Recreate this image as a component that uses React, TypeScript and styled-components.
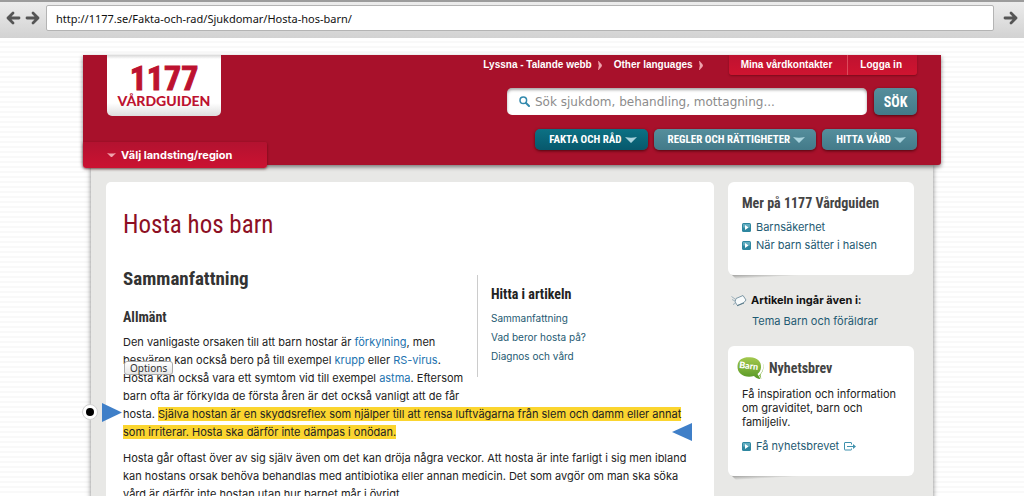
import React from 'react';
import styled, { createGlobalStyle } from 'styled-components';

const body = `"Inter", "Liberation Sans", Arial, sans-serif`;
const narrow = `"Liberation Sans Narrow", "Roboto Condensed", "Roboto", sans-serif`;
const red = '#a8112b';

const Global = createGlobalStyle`
  * { box-sizing: border-box; }
  body { margin: 0; overflow: hidden; color: #222; font: 11px/18px ${body}; }
  h1, h2, h3, p, ul { margin: 0; padding: 0; }
  ul { list-style: none; }
  a { color: #1e5a72; text-decoration: none; }
  button, input { font: inherit; margin: 0; }
`;

const Shell = styled.div`
  display: flex;
  flex-direction: column;
  height: 100vh;
`;

const Toolbar = styled.div`
  display: flex;
  align-items: center;
  gap: 6px;
  flex: none;
  height: 38px;
  padding: 0 6px 4px;
  border-top: 2px solid #9c9c9c;
  background: linear-gradient(#ececec, #d2d2d2);
`;

const ArrowButton = styled.button`
  display: flex;
  padding: 0;
  border: 0;
  background: none;
  svg { display: block; }
`;

const Arrows = styled.div`
  display: flex;
  gap: 4px;
`;

const Address = styled.input`
  flex: 1;
  min-width: 0;
  height: 26px;
  margin-right: 3px;
  padding: 0 9px;
  border: 1px solid #b4b4b4;
  border-radius: 2px;
  background: #fff;
  color: #111;
  font: 11px "Noto Sans", sans-serif;
`;

const Viewport = styled.div`
  flex: 1;
  min-height: 0;
  overflow: hidden auto;
  scrollbar-width: none;
  padding: 17px 83px 0;
  background: repeating-linear-gradient(#fff 0 3px, #f9f9f9 3px 5px);
`;

const Header = styled.header`
  position: relative;
  z-index: 1;
  display: flex;
  justify-content: space-between;
  height: 110px;
  border-radius: 0 0 3px 3px;
  background: ${red};
  box-shadow: 0 2px 4px rgba(0, 0, 0, 0.5);
`;

const Brand = styled.div`
  display: flex;
  flex-direction: column;
  justify-content: space-between;
  margin-bottom: -3px;
`;

const Logo = styled.a`
  display: flex;
  flex-direction: column;
  align-items: center;
  width: 114px;
  height: 61px;
  margin-left: 24px;
  padding-top: 8px;
  border-radius: 0 0 5px 5px;
  background: linear-gradient(#d8d8d8, #fff 4px, #fff 48px, #dedede);
  color: #bd1230;
`;

const LogoNumber = styled.span`
  font: 700 34px/30px ${narrow};
  -webkit-text-stroke: 1px #bd1230;
`;

const LogoName = styled.span`
  font: 900 14px/16px "Lato", sans-serif;
`;

const RegionButton = styled.button`
  display: flex;
  align-items: center;
  gap: 5px;
  width: 184px;
  height: 26px;
  padding: 0 0 0 24px;
  border: 0;
  border-radius: 0 2px 3px 3px;
  background: linear-gradient(#b31230, #cb1231);
  box-shadow: 0 1px 3px rgba(60, 0, 0, 0.6);
  color: #fff;
  font-weight: 700;
`;

const Tools = styled.div`
  display: flex;
  flex-direction: column;
  align-items: flex-end;
  padding-right: 24px;
`;

const TopLinks = styled.nav`
  display: flex;
  height: 20px;
  font: bold 10px/20px "Liberation Sans", Arial, sans-serif;
  a { color: #fff; }
`;

const PlainLink = styled.a`
  display: flex;
  align-items: center;
  gap: 6px;
  margin-right: 12px;
`;

const Account = styled.div`
  display: flex;
  margin-left: 14px;
  border-radius: 0 0 3px 3px;
  background: linear-gradient(#bf1230, #cf1430);
  box-shadow: 0 1px 2px rgba(60, 0, 0, 0.4);
  a { padding: 0 15px 0 12px; }
  a + a { border-left: 1px solid #dd4a5c; }
`;

const SearchForm = styled.form`
  display: flex;
  gap: 7px;
  margin-top: 13px;
`;

const SearchBox = styled.label`
  display: flex;
  align-items: center;
  gap: 5px;
  width: 360px;
  height: 27px;
  padding: 0 12px;
  border-radius: 5px;
  background: #fff;
  box-shadow: inset 0 2px 3px rgba(0, 0, 0, 0.35);
  input {
    flex: 1;
    min-width: 0;
    padding: 0;
    border: 0;
    outline: 0;
    background: none;
    font: 12px "DejaVu Sans", sans-serif;
  }
  input::placeholder { color: #8c8c8c; opacity: 1; }
`;

const TealButton = styled.button<{ $active?: boolean }>`
  display: flex;
  align-items: center;
  gap: 3px;
  padding: 0 11px 0 14px;
  border: 0;
  border-radius: 5px;
  background: ${p => (p.$active ? 'linear-gradient(#0c7184, #07586c)' : 'linear-gradient(#558e9c, #437a89)')};
  box-shadow: 0 1px 3px rgba(40, 0, 0, 0.7);
  color: #fff;
  font: bold 11px ${narrow};
`;

const SearchButton = styled(TealButton)`
  justify-content: center;
  width: 43px;
  padding: 0;
  font-size: 14px;
`;

const MainNav = styled.nav`
  display: flex;
  gap: 6px;
  height: 21px;
  margin-top: 14px;
`;

const Body = styled.div`
  display: flex;
  align-items: flex-start;
  gap: 14px;
  min-height: 500px;
  margin: 0 8px;
  padding: 17px 19px 20px 15px;
  background: #e8e8e6;
  box-shadow: 0 0 5px rgba(0, 0, 0, 0.5);
`;

const Article = styled.main`
  position: relative;
  flex: 1;
  min-width: 0;
  padding: 27px 16px 20px 17px;
  border-radius: 5px;
  background: #fff;
  p { margin-bottom: 8px; color: #222; }
  p a { color: #2273b0; }
`;

const Title = styled.h1`
  color: #8d0f24;
  font: 400 25px/32px ${narrow};
`;

const Section = styled.h2`
  padding-top: 24px;
  color: #333;
  font: 700 19px/28px ${narrow};
`;

const SubSection = styled.h3`
  margin: 14px 0 6px;
  color: #333;
  font: 700 14px/20px ${narrow};
`;

const Contents = styled.nav`
  float: right;
  width: 221px;
  height: 102px;
  margin-top: 34px;
  padding: 9px 0 0 13px;
  border-left: 1px solid #ccc;
  font-size: 10px;
  line-height: 19px;
  h2 { margin-bottom: 5px; color: #222; font: 700 14px/20px ${narrow}; }
`;

const Mark = styled.mark`
  background: #fbd52f;
  color: #222;
`;

const Pin = styled.span<{ $x: number; $y: number }>`
  position: absolute;
  left: ${p => p.$x}px;
  top: ${p => p.$y}px;
  svg { display: block; }
`;

const OptionsButton = styled.button`
  position: absolute;
  left: 18px;
  top: 179px;
  height: 14px;
  padding: 0 5px;
  border: 1px solid #aaa;
  border-radius: 3px;
  background: linear-gradient(#fff, #e6e6e6);
  color: #333;
  font: 10px/11px "Noto Sans", sans-serif;
`;

const Sidebar = styled.aside`
  width: 186px;
  flex: none;
`;

const Card = styled.section`
  position: relative;
  padding: 11px 14px 21px;
  border-radius: 6px;
  background: #fff;
  p { margin: 7px 0 8px; line-height: 14px; }
  &::after {
    content: '';
    position: absolute;
    z-index: 0;
    left: 4px;
    top: 100%;
    width: 70px;
    height: 4px;
    background: linear-gradient(to bottom right, #a2a2a0, #e8e8e6 55%);
    clip-path: polygon(0 0, 100% 0, 4px 100%);
  }
`;

const CardTitle = styled.h2`
  display: flex;
  align-items: center;
  gap: 5px;
  margin-bottom: 5px;
  color: #444;
  font: 700 14px/20px ${narrow};
`;

const NewsTitle = styled(CardTitle)`
  margin: -1px 0 0 -5px;
`;

const BulletLink = styled.a`
  display: flex;
  align-items: center;
  gap: 5px;
`;

const Related = styled.section`
  padding: 16px 0 16px 24px;
  h2 { display: flex; align-items: center; gap: 4px; margin: 0 0 3px -21px; color: #111; font: 700 11px/18px ${body}; }
`;

const NavArrow = ({ back }: { back?: boolean }) => (
  <svg width="15" height="16" viewBox="0 0 15 16" fill="none" stroke="#555" strokeWidth="2.8" strokeLinecap="round" strokeLinejoin="round">
    {back ? <path d="M13 8H2M7 3L2 8l5 5" /> : <path d="M2 8h11M8 3l5 5-5 5" />}
  </svg>
);

const Caret = ({ color = '#a9d3dd', width = 12 }: { color?: string; width?: number }) => (
  <svg width={width} height={width / 2} viewBox="0 0 12 6"><path d="M0 0Q6 1.6 12 0L6 6z" fill={color} /></svg>
);

const Chevron = () => (
  <svg width="4" height="9" viewBox="0 0 4 9"><path d="M0 0Q2 1 4 4.5Q2 8 0 9Q2 4.5 0 0z" fill="#f0a4ad" stroke="#f0a4ad" strokeWidth=".5" /></svg>
);

const Bullet = () => (
  <svg width="9" height="9" viewBox="0 0 9 9">
    <rect width="9" height="9" rx="1.5" fill="#2e87a0" />
    <rect x="1" y="1" width="7" height="3.5" fill="#62adc0" />
    <path d="M3 2l3.6 2.5L3 7z" fill="#fff" />
  </svg>
);

const Tag = () => (
  <svg width="16" height="13" viewBox="0 0 16 13" fill="none" stroke="#8ba5b2" strokeLinejoin="round">
    <path d="M5 4.5L12 1.5 15 6 13 8.5 6.5 11.5 4 8z" fill="#f8fbfc" stroke="#7e98a6" />
    <path d="M6 11.8l7-2.8" stroke="#5d7d8d" />
    <path d="M0.5 2.5L4 5M1 5.5L4 7M2 10.5Q4 10 5 8" strokeWidth=".8" />
  </svg>
);

const BarnBadge = () => (
  <svg width="27" height="24" viewBox="0 0 27 24">
    <defs>
      <linearGradient id="leaf" x1="0" y1="0" x2="0" y2="1">
        <stop offset="0" stopColor="#a3c84e" /><stop offset="1" stopColor="#569824" />
      </linearGradient>
    </defs>
    <path d="M0.5 10C1 3.5 6 1 13 1.3C21 1.6 24.5 6 24 11.5C23.8 14.5 22.5 16.5 20.5 18L23.5 23C20.5 22.8 18 21.5 17 20C8 22.5 0 18 0.5 10z" fill="url(#leaf)" />
    <path d="M25.5 6Q28 14 22 19.5L24.5 23Q23 19 24 18Q28 13 25.5 6z" fill="#79ad36" />
    <text x="2" y="13" fontFamily="Lato, sans-serif" fontSize="9" fontWeight="900" fill="#fff" transform="rotate(6 12 12)">Barn</text>
  </svg>
);

const External = () => (
  <svg width="12" height="9" viewBox="0 0 12 9" fill="none" stroke="#3f91ad">
    <path d="M7.5 2.5v-1.5a.5.5 0 0 0-.5-.5H1A.5.5 0 0 0 .5 1v6.5a.5.5 0 0 0 .5.5H7a.5.5 0 0 0 .5-.5V6.5M3 4.5h7" />
    <path d="M9 2l3 2.5L9 7z" fill="#3f91ad" stroke="none" />
  </svg>
);

const SearchIcon = () => (
  <svg width="11" height="11" viewBox="0 0 11 11" fill="none" stroke="#3389ad" strokeLinecap="round">
    <circle cx="4.3" cy="4.3" r="3.3" strokeWidth="1.5" />
    <path d="M7 7l3 3" strokeWidth="2" />
  </svg>
);

export default function App() {
  return (
    <Shell>
      <Global />
      <Toolbar>
        <Arrows>
          <ArrowButton aria-label="Back"><NavArrow back /></ArrowButton>
          <ArrowButton aria-label="Forward"><NavArrow /></ArrowButton>
        </Arrows>
        <Address aria-label="Address" defaultValue="http://1177.se/Fakta-och-rad/Sjukdomar/Hosta-hos-barn/" />
        <ArrowButton aria-label="Go"><NavArrow /></ArrowButton>
      </Toolbar>
      <Viewport>
        <Header>
          <Brand>
            <Logo href="#">
              <LogoNumber>1177</LogoNumber>
              <LogoName>VÅRDGUIDEN</LogoName>
            </Logo>
            <RegionButton><Caret color="#f0a4ad" width={9} />Välj landsting/region</RegionButton>
          </Brand>
          <Tools>
            <TopLinks>
              <PlainLink href="#">Lyssna - Talande webb <Chevron /></PlainLink>
              <PlainLink href="#">Other languages <Chevron /></PlainLink>
              <Account>
                <a href="#">Mina vårdkontakter</a>
                <a href="#">Logga in</a>
              </Account>
            </TopLinks>
            <SearchForm onSubmit={e => e.preventDefault()}>
              <SearchBox>
                <SearchIcon />
                <input aria-label="Sök" placeholder="Sök sjukdom, behandling, mottagning..." />
              </SearchBox>
              <SearchButton>SÖK</SearchButton>
            </SearchForm>
            <MainNav>
              <TealButton $active>FAKTA OCH RÅD <Caret /></TealButton>
              <TealButton>REGLER OCH RÄTTIGHETER <Caret /></TealButton>
              <TealButton>HITTA VÅRD <Caret /></TealButton>
            </MainNav>
          </Tools>
        </Header>
        <Body>
          <Article>
            <Title>Hosta hos barn</Title>
            <Contents>
              <h2>Hitta i artikeln</h2>
              <ul>
                <li><a href="#">Sammanfattning</a></li>
                <li><a href="#">Vad beror hosta på?</a></li>
                <li><a href="#">Diagnos och vård</a></li>
              </ul>
            </Contents>
            <Section>Sammanfattning</Section>
            <SubSection>Allmänt</SubSection>
            <p>
              Den vanligaste orsaken till att barn hostar är <a href="#">förkylning</a>, men<br />
              besvären kan också bero på till exempel <a href="#">krupp</a> eller <a href="#">RS-virus</a>.<br />
              Hosta kan också vara ett symtom vid till exempel <a href="#">astma</a>. Eftersom<br />
              barn ofta är förkylda de första åren är det också vanligt att de får<br />
              hosta. <Mark>Själva hostan är en skyddsreflex som hjälper till att rensa luftvägarna från slem och damm eller annat<br />
              som irriterar. Hosta ska därför inte dämpas i onödan.</Mark>
            </p>
            <p>
              Hosta går oftast över av sig själv även om det kan dröja några veckor. Att hosta är inte farligt i sig men ibland<br />
              kan hostans orsak behöva behandlas med antibiotika eller annan medicin. Det som avgör om man ska söka<br />
              vård är därför inte hostan utan hur barnet mår i övrigt.
            </p>
            <OptionsButton>Options</OptionsButton>
            <Pin $x={-24} $y={222}>
              <svg width="16" height="16" viewBox="0 0 16 16">
                <circle cx="8" cy="8" r="7.5" fill="#fff" stroke="#d2d2d2" />
                <circle cx="8" cy="8" r="4" fill="#000" />
              </svg>
            </Pin>
            <Pin $x={-4} $y={221}>
              <svg width="20" height="19" viewBox="0 0 20 19"><path d="M0 0l20 9.5L0 19z" fill="#3f7fc8" /></svg>
            </Pin>
            <Pin $x={566} $y={241}>
              <svg width="20" height="18" viewBox="0 0 20 18"><path d="M20 0v18L0 9z" fill="#3f7fc8" /></svg>
            </Pin>
          </Article>
          <Sidebar>
            <Card>
              <CardTitle>Mer på 1177 Vårdguiden</CardTitle>
              <ul>
                <li><BulletLink href="#"><Bullet />Barnsäkerhet</BulletLink></li>
                <li><BulletLink href="#"><Bullet />När barn sätter i halsen</BulletLink></li>
              </ul>
            </Card>
            <Related>
              <h2><Tag />Artikeln ingår även i:</h2>
              <a href="#">Tema Barn och föräldrar</a>
            </Related>
            <Card>
              <NewsTitle><BarnBadge />Nyhetsbrev</NewsTitle>
              <p>Få inspiration och information om graviditet, barn och familjeliv.</p>
              <BulletLink href="#"><Bullet />Få nyhetsbrevet <External /></BulletLink>
            </Card>
          </Sidebar>
        </Body>
      </Viewport>
    </Shell>
  );
}
